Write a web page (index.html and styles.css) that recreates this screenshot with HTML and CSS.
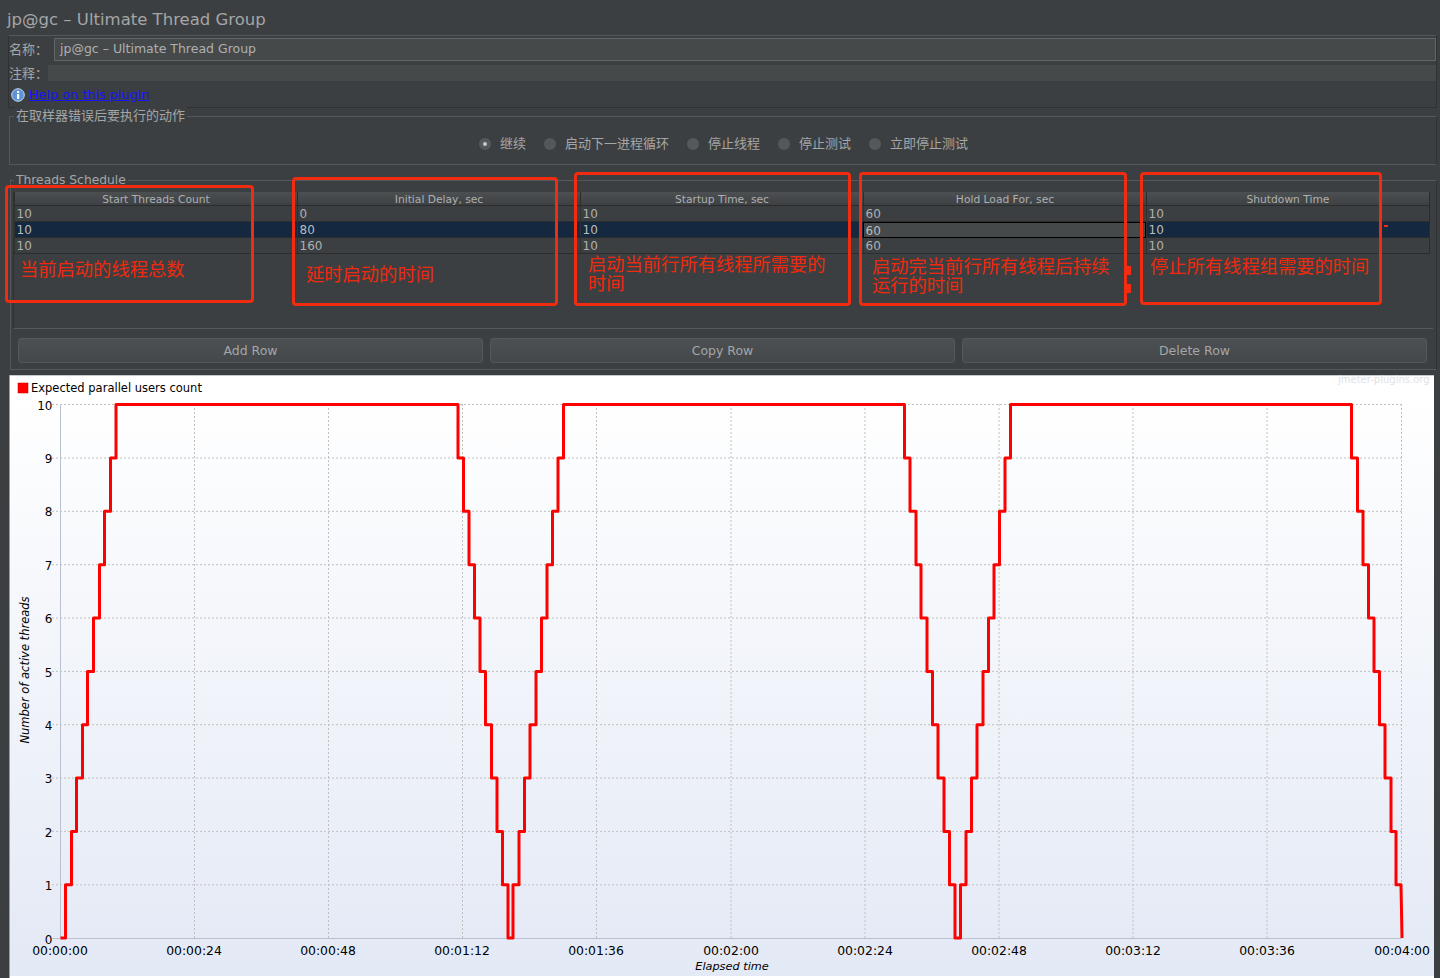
FILE: index.html
```html
<!DOCTYPE html>
<html lang="zh">
<head>
<meta charset="utf-8">
<title>jp@gc - Ultimate Thread Group</title>
<link rel="stylesheet" href="styles.css">
</head>
<body>
<div class="page">
  <div class="title">jp@gc – Ultimate Thread Group</div>

  <section class="meta">
    <div class="meta-row name-row"><span class="meta-label">名称：</span><div class="name-field">jp@gc – Ultimate Thread Group</div></div>
    <div class="meta-row note-row"><span class="meta-label">注释：</span><div class="note-field"></div></div>
    <div class="help-row">
      <svg class="info" viewBox="0 0 14 14" width="14" height="14"><circle cx="7" cy="7" r="6.3" fill="#5b93d6" stroke="#c7d7ea" stroke-width="1"/><rect x="6" y="6" width="2.2" height="5" fill="#fff"/><rect x="6" y="3" width="2.2" height="2" fill="#fff"/></svg>
      <a class="help-link" href="#">Help on this plugin</a>
    </div>
  </section>

  <section class="group error-group">
    <div class="legend">在取样器错误后要执行的动作</div>
    <div class="radios">
      <label class="radio"><i class="dot on"></i>继续</label>
      <label class="radio"><i class="dot"></i>启动下一进程循环</label>
      <label class="radio"><i class="dot"></i>停止线程</label>
      <label class="radio"><i class="dot"></i>停止测试</label>
      <label class="radio"><i class="dot"></i>立即停止测试</label>
    </div>
  </section>

  <section class="group schedule">
    <div class="legend legend-latin">Threads Schedule</div>
    <div class="table-pane">
      <div class="grid">
        <div class="th">Start Threads Count</div><div class="th">Initial Delay, sec</div><div class="th">Startup Time, sec</div><div class="th">Hold Load For, sec</div><div class="th">Shutdown Time</div>
        <div class="td">10</div><div class="td">0</div><div class="td">10</div><div class="td">60</div><div class="td">10</div>
        <div class="td sel">10</div><div class="td sel">80</div><div class="td sel">10</div><div class="td edit">60</div><div class="td sel">10</div>
        <div class="td">10</div><div class="td">160</div><div class="td">10</div><div class="td">60</div><div class="td">10</div>
      </div>
    </div>
    <div class="buttons">
      <button class="btn">Add Row</button>
      <button class="btn">Copy Row</button>
      <button class="btn">Delete Row</button>
    </div>
  </section>

  <section class="chart">
    <svg class="plot" viewBox="10 375 1424 601" width="1424" height="601">
      <text class="wm" x="1338" y="383">jmeter-plugins.org</text>
      <rect x="18" y="383" width="10" height="10" fill="#f00" stroke="#b00" stroke-width="0.5"/>
      <text class="leg" x="31" y="392">Expected parallel users count</text>

      <g class="gridlines">
        <path d="M52 404.5H1402M52 458H1402M52 511.3H1402M52 564.7H1402M52 618H1402M52 671.4H1402M52 724.7H1402M52 778.1H1402M52 831.4H1402M52 884.8H1402"/>
        <path d="M194.5 404V938M328.5 404V938M462.5 404V938M596.5 404V938M731 404V938M865 404V938M999 404V938M1133 404V938M1267 404V938M1401.5 404V938"/>
      </g>
      <path class="axis" d="M60.5 404V938.5M52 938.5H1402"/>

      <g class="ylab">
        <text x="52.5" y="410">10</text><text x="52.5" y="463">9</text><text x="52.5" y="516">8</text><text x="52.5" y="570">7</text><text x="52.5" y="623">6</text><text x="52.5" y="677">5</text><text x="52.5" y="730">4</text><text x="52.5" y="783">3</text><text x="52.5" y="837">2</text><text x="52.5" y="890">1</text><text x="52.5" y="944">0</text>
      </g>
      <g class="xlab">
        <text x="60" y="955">00:00:00</text><text x="194" y="955">00:00:24</text><text x="328" y="955">00:00:48</text><text x="462" y="955">00:01:12</text><text x="596" y="955">00:01:36</text><text x="731" y="955">00:02:00</text><text x="865" y="955">00:02:24</text><text x="999" y="955">00:02:48</text><text x="1133" y="955">00:03:12</text><text x="1267" y="955">00:03:36</text><text x="1402" y="955">00:04:00</text>
      </g>
      <text class="ytitle" transform="translate(29 670) rotate(-90)">Number of active threads</text>
      <text class="xtitle" x="732" y="970">Elapsed time</text>

      <path class="series" d="M60.5 938H65.5V884.8H71.5V831.4H76.5V778.1H82.5V724.7H87.5V671.4H93.5V618H99.5V564.7H104.5V511.3H110.5V458H116V404.5H458V458H463.5V511.3H469V564.7H474.5V618H480V671.4H485.5V724.7H491.5V778.1H497V831.4H502.5V884.8H508V938H513V884.8H519V831.4H524.5V778.1H530V724.7H536V671.4H541.5V618H547V564.7H552.5V511.3H558V458H563.5V404.5H904.5V458H910V511.3H916V564.7H921V618H927V671.4H932.5V724.7H938V778.1H944V831.4H949.5V884.8H955V938H960.5V884.8H966V831.4H971.5V778.1H977V724.7H983V671.4H988.5V618H994V564.7H999.5V511.3H1005V458H1010.5V404.5H1351.5V458H1357.5V511.3H1363V564.7H1368.5V618H1374V671.4H1379.5V724.7H1385V778.1H1391V831.4H1396V884.8H1401L1402 938"/>
    </svg>
  </section>

  <div class="note box-a"><span class="note-text">当前启动的线程总数</span></div>
  <div class="note box-b"><span class="note-text">延时启动的时间</span></div>
  <div class="note box-c"><span class="note-text">启动当前行所有线程所需要的时间</span></div>
  <div class="note box-d"><span class="note-text">启动完当前行所有线程后持续运行的时间</span></div>
  <div class="note box-e"><span class="note-text">停止所有线程组需要的时间</span></div>
  <i class="speck speck-a"></i><i class="speck speck-b"></i><i class="speck speck-c"></i>
</div>
</body>
</html>
```
FILE: styles.css
```css
* { box-sizing: border-box; }
html, body { margin: 0; padding: 0; }
body {
  width: 1440px;
  height: 978px;
  overflow: hidden;
  background: #3c3f41;
  color: #aeb0b1;
  font-family: "DejaVu Sans", "Noto Sans CJK SC", sans-serif;
}
.page { position: relative; width: 1440px; height: 978px; }

.title {
  height: 35px;
  padding: 10px 0 0 7px;
  font-size: 16.5px;
  line-height: 20px;
  color: #a4a6a7;
}

.meta {
  height: 73px;
  margin: 0 3px 0 8px;
  border: 1px solid #2f3133;
  border-top-color: #55585a;
  display: flex;
  flex-direction: column;
}
.meta-row { display: flex; align-items: center; font-size: 13px; }
.meta-label { margin-top: -2px; color: #a4a6a7; }
.name-row { height: 25px; padding-top: 1px; }
.name-row .meta-label { width: 45px; flex: none; }
.name-field {
  flex: 1;
  height: 23px;
  padding-left: 5px;
  font-size: 12.5px;
  line-height: 19px;
  background: #45494a;
  border: 1px solid #646768;
  color: #aeb0b1;
}
.note-row { height: 20px; margin-top: 2px; }
.note-row .meta-label { width: 39px; flex: none; }
.note-field { flex: 1; height: 16px; background: #45494a; }
.help-row { display: flex; align-items: center; gap: 4px; height: 21px; padding-left: 2px; margin-top: 1px; }
.info { flex: none; }
.help-link { color: #1414ff; font-size: 12.8px; text-decoration: underline; }

.group {
  position: relative;
  border: 1px solid #55585a;
  border-right-color: #2f3133;
  border-bottom-color: #55585a;
}
.legend {
  position: absolute;
  left: 4px;
  top: -10px;
  padding: 0 2px;
  font-size: 13px;
  line-height: 17px;
  background: #3c3f41;
  color: #a4a6a7;
}
.legend-latin { left: 3px; top: -9px; font-size: 12.3px; }
.error-group { height: 49px; margin: 8px 3px 0 9px; }
.radios {
  display: flex;
  padding: 19px 0 0 468px;
}
.radio { display: flex; align-items: center; gap: 8px; height: 16px; margin-right: 17px; font-size: 13px; line-height: 16px; color: #a4a6a7; }
.dot {
  display: block;
  flex: none;
  position: relative;
  width: 14px;
  height: 14px;
  border-radius: 50%;
  background: #55585a;
  border: 1px solid #3a3c3e;
}
.dot.on::after {
  content: "";
  position: absolute;
  left: 4px;
  top: 4px;
  width: 4px;
  height: 4px;
  border-radius: 50%;
  background: #c8c9ca;
}

.schedule { height: 190px; margin: 15px 3px 0 10px; }
.table-pane {
  height: 137px;
  margin: 11px 3px 0 2px;
  border-left: 1px solid #2f3133;
  border-bottom: 1px solid #55585a;
}
.grid {
  display: grid;
  grid-template-columns: repeat(5, 283px);
  grid-template-rows: 14px 16px 16px 16px;
  width: 1416px;
  border-right: 1px solid #2a2c2e;
}
.th {
  padding-top: 1px;
  font-size: 10.7px;
  line-height: 13px;
  text-align: center;
  background: linear-gradient(#4d5052, #3e4143);
  border-left: 1px solid #2a2c2e;
  border-bottom: 1px solid #2a2c2e;
  color: #aeb0b1;
}
.td {
  font-size: 12px;
  line-height: 14px;
  padding: 1px 1px 0 1.5px;
  border-left: 1px solid #2f3133;
  border-bottom: 1px solid #2a2c2e;
  color: #aeb0b1;
}
.td.sel { background: #142840; color: #b9bcbe; }
.td.edit { background: #45494a; border: 1px solid #000; color: #b9bcbe; }

.buttons {
  display: flex;
  gap: 7px;
  margin: 9px 0 0 7px;
  width: 1409px;
}
.btn {
  flex: 1;
  height: 25px;
  padding: 0;
  font-family: inherit;
  font-size: 12.5px;
  color: #a4a6a7;
  background: linear-gradient(#4c5052, #45484a);
  border: 1px solid #55585a;
  border-radius: 3px;
}

.chart {
  width: 1424px;
  height: 603px;
  margin: 5px 0 0 10px;
  border-top: 1px solid #c8c8c8;
  border-bottom: 2px solid #fff;
  box-shadow: -1px 0 0 #9a9c9e;
  background: linear-gradient(#ffffff 3%, #e3e9f5 100%);
}
.plot { display: block; margin-top: -1px; font-family: "DejaVu Sans", sans-serif; }
.wm { font-size: 10px; fill: #dfe2e7; }
.leg { font-size: 11.5px; fill: #000; }
.gridlines path { fill: none; stroke: #c0c0c0; stroke-width: 1; stroke-dasharray: 2 2; }
.axis { fill: none; stroke: #b9c0cf; stroke-width: 1; }
.ylab text { font-size: 12px; text-anchor: end; fill: #000; }
.xlab text { font-size: 12.4px; text-anchor: middle; fill: #000; }
.ytitle { font-size: 11.5px; font-style: italic; text-anchor: middle; fill: #000; }
.xtitle { font-size: 11.3px; font-style: italic; text-anchor: middle; fill: #000; }
.series { fill: none; stroke: #f00; stroke-width: 3; stroke-linejoin: round; }

.note {
  position: absolute;
  border: 3px solid #f22c10;
  border-radius: 4px;
  color: #ee2a0e;
  font-size: 18.3px;
  line-height: 19px;
}
.note-text { position: absolute; font-family: "Noto Sans CJK SC", sans-serif; }
.box-a { left: 5px; top: 185px; width: 249px; height: 118px; }
.box-a .note-text { left: 12px; top: 71px; }
.box-b { left: 292px; top: 177px; width: 266px; height: 129px; }
.box-b .note-text { left: 11px; top: 84px; }
.box-c { left: 574px; top: 172px; width: 277px; height: 134px; }
.box-c .note-text { left: 11px; top: 79px; width: 244px; }
.box-d { left: 859px; top: 172px; width: 268px; height: 134px; }
.box-d .note-text { left: 10px; top: 81px; width: 244px; }
.box-e { left: 1140px; top: 172px; width: 242px; height: 133px; }
.box-e .note-text { left: 7px; top: 81px; width: 228px; }
.speck { position: absolute; background: #f22c10; }
.speck-a { left: 1125px; top: 266px; width: 6px; height: 9px; }
.speck-b { left: 1127px; top: 284px; width: 4px; height: 9px; }
.speck-c { left: 1384px; top: 225px; width: 4px; height: 2px; }
```
